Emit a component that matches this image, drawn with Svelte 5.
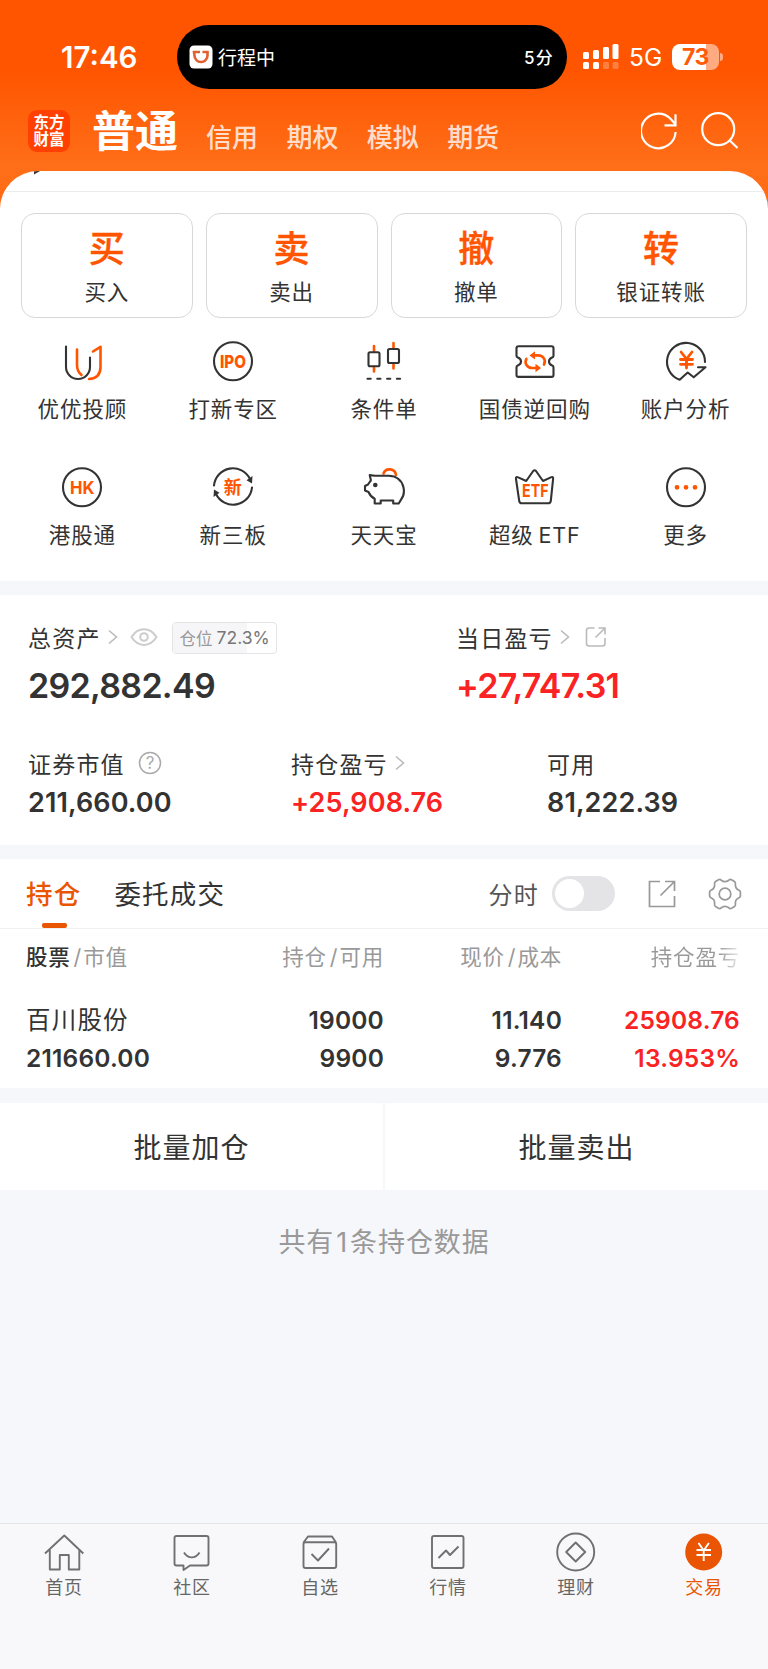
<script lang="ts">
  const accounts = ['信用', '期权', '模拟', '期货'];

  const actions = [
    { mark: '买', label: '买入' },
    { mark: '卖', label: '卖出' },
    { mark: '撤', label: '撤单' },
    { mark: '转', label: '银证转账' },
  ];

  const tools = [
    { icon: 'adviser', label: '优优投顾' },
    { icon: 'ipo', label: '打新专区' },
    { icon: 'candles', label: '条件单' },
    { icon: 'bond', label: '国债逆回购' },
    { icon: 'analysis', label: '账户分析' },
    { icon: 'hk', label: '港股通' },
    { icon: 'neeq', label: '新三板' },
    { icon: 'piggy', label: '天天宝' },
    { icon: 'etf', label: '超级\u2009ETF' },
    { icon: 'more', label: '更多' },
  ];

  const position = 72.3;

  const navs = [
    { icon: 'home', label: '首页' },
    { icon: 'community', label: '社区' },
    { icon: 'watchlist', label: '自选' },
    { icon: 'market', label: '行情' },
    { icon: 'wealth', label: '理财' },
    { icon: 'trade', label: '交易' },
  ];

  let currentNav = $state('trade');
  let timeline = $state(false);
</script>

{#snippet chevron()}
  <svg class="chevron" width="10" height="16" viewBox="0 0 10 16"><path d="M1 1.5l7.5 6.5L1 14.5" /></svg>
{/snippet}

{#snippet toolIcon(name: string)}
  <svg class="tool-icon" width="44" height="44" viewBox="0 0 44 44">
    {#if name === 'adviser'}
      <path d="M6 7.500v20.500a12 12 0 0 0 24 0V18.500" />
      <path class="hot" d="M17 10.500v15.500c0 4.500 1.500 7.500 4.500 10M33 12.500l7.500-4.700V28c0 7.500-4 11.500-11.500 12" />
    {:else if name === 'ipo'}
      <circle cx="22" cy="22.300" r="19" />
      <text class="ipo" x="9" y="28.600" textLength="26" lengthAdjust="spacingAndGlyphs">IPO</text>
    {:else if name === 'candles'}
      <path class="hot" d="M12 7V12.500M12 28v4.500M31.500 4V9M31.500 25v4.500" />
      <rect x="6.500" y="13.200" width="11" height="14" rx="1.500" />
      <rect x="26" y="10" width="11" height="14" rx="1.500" />
      <path stroke-dasharray="3.2 6.6" d="M5.500 39.800h36" />
    {:else if name === 'bond'}
      <path d="M5.500 7.300h33q2 0 2 2v7.500q0 1.300-1.300 1.800-3.200 1.200-3.200 4t3.200 4q1.300.500 1.300 1.800v7.500q0 2-2 2h-33q-2 0-2-2v-7.500q0-1.300 1.300-1.800 3.200-1.200 3.200-4t-3.200-4q-1.300-.500-1.300-1.800V9.300q0-2 2-2z" />
      <path class="hot" d="M21 16.400h4c5.500 0 8.300 5 6 9.200M23.400 29h-4c-5.500 0-8.300-5-6-9.200" />
      <path class="hot-fill" d="M16.500 16.400l5.500-4.200v8.400zM28 29l-5.500-4.200v8.400z" />
    {:else if name === 'analysis'}
      <path d="M41 23A19 19 0 1 0 15.700 40.800l8-7.300 6 4.800 11.800-10H34" />
      <path class="hot thick" d="M17 13l5.500 7 5.500-7M22.500 20v9M16.500 20.500h12M16.500 25.300h12" />
    {:else if name === 'hk'}
      <circle cx="22" cy="22.300" r="19" />
      <text class="hk" x="10" y="28.800" textLength="24.500" lengthAdjust="spacingAndGlyphs">HK</text>
    {:else if name === 'neeq'}
      <path d="M3 20.500A19 19 0 0 1 39 14M41 22.500A19 19 0 0 1 5 29" />
      <path class="dark-fill" d="M41.500 11l-.5 7.500-5.500-3.200zM2.500 32l.5-7.500 5.500 3.200z" />
      <text class="xin" x="21.800" y="28.700">新</text>
    {:else if name === 'piggy'}
      <path class="hot" d="M21.500 8.500a6.500 6.500 0 0 1 12.500 1.500" />
      <path d="M13.500 10.300L8.200 9.600l1.200 5.200-2.900 4.200-3 1.500v4.500l3.500 1.500c1.500 3.500 3.500 5.500 6.200 6.800v4.700h6v-3h12.500v3h5.500l2.200-3.600C42.500 30.500 43 26.500 42 22 40.500 15 35 10.300 27 10.300z" transform="translate(-.5 .5)" />
      <circle class="dark-fill" cx="13.300" cy="20" r="2.300" />
    {:else if name === 'etf'}
      <path d="M3 14c-.300-2 .800-2.400 2.200-1.600l8 3.600 7-10q1.400-1.500 2.800 0l7 10 7.800-3.600c1.600-.700 2.600-.300 2.300 1.600l-2.300 21.800q-.300 2.500-2.800 2.500H9q-2.500 0-2.800-2.500z" />
      <text class="etf" x="9" y="32.300" textLength="26.500" lengthAdjust="spacingAndGlyphs">ETF</text>
    {:else}
      <circle cx="22" cy="22.300" r="19" />
      <path class="hot-fill" d="M10.600 22.300a2.400 2.400 0 1 0 4.800 0 2.400 2.400 0 1 0-4.800 0M19.600 22.300a2.400 2.400 0 1 0 4.800 0 2.400 2.400 0 1 0-4.800 0M28.600 22.300a2.400 2.400 0 1 0 4.800 0 2.400 2.400 0 1 0-4.800 0" />
    {/if}
  </svg>
{/snippet}

{#snippet navIcon(name: string)}
  <svg class="nav-icon" width="40" height="40" viewBox="0 0 40 40">
    {#if name === 'home'}
      <path d="M1 21.500L20.300 3.500l19 18M5.800 18v19.500h10V23h9v14.500h10.500V18" />
    {:else if name === 'community'}
      <path d="M4.500 4h30q2 0 2 2v25.500q0 2-2 2H18l-6.500 4.500v-4.500h-7q-2 0-2-2V6q0-2 2-2zM12 20.500c4 6.500 11.500 6.500 15.500 0" />
    {:else if name === 'watchlist'}
      <path d="M3.500 10.500L8 4.500h24l4 6M5.500 10.300h29q1.700 0 1.700 1.700v22q0 2-2 2H5.500q-2 0-2-2V12q0-1.700 2-1.700zM11.500 22l6.500 6.500 11-12" />
    {:else if name === 'market'}
      <rect x="4" y="4" width="31.500" height="32" rx="2" />
      <path d="M10.500 26l7.500-7.500 4 4.500 8.500-8.500" />
    {:else if name === 'wealth'}
      <circle cx="19.700" cy="20" r="18.500" />
      <path d="M19.700 10.500l9.500 9.500-9.500 9.500-9.500-9.500z" />
    {:else}
      <circle class="disc" cx="19.700" cy="20" r="18.500" />
      <path class="yen" d="M14.500 11l5.200 7.500 5.200-7.500M19.700 18.500V29M12.500 18h14.500M12.500 23h14.500" />
    {/if}
  </svg>
{/snippet}

<div class="app">
  <div class="status">
    <span class="clock">17:46</span>
    <div class="island">
      <svg width="24" height="24" viewBox="0 0 24 24">
        <rect x=".5" y=".5" width="23" height="23" rx="4.500" fill="#fff" />
        <path d="M5 7h13.500v3.500a6.500 6.500 0 0 1-13 0z" fill="none" stroke="#e0602f" stroke-width="2.600" />
        <path d="M11 5h2.500v4H11z" fill="#fff" />
      </svg>
      <span class="trip">行程中</span>
      <span class="minutes">5分</span>
    </div>
    <svg class="signal" width="37" height="26" viewBox="0 0 37 26" fill="#fff">
      <rect x="0" y="8" width="6" height="7" rx="1.500" />
      <rect x="10" y="6" width="6" height="9" rx="1.500" />
      <rect x="20" y="3" width="6" height="12" rx="1.500" />
      <rect x="29.500" y="0" width="6" height="15" rx="1.500" />
      <rect x="0" y="18" width="6" height="7" rx="1.500" />
      <rect x="10" y="18" width="6" height="7" rx="1.500" />
      <rect x="20" y="18" width="6" height="7" rx="1.500" opacity=".25" />
      <rect x="29.500" y="18" width="6" height="7" rx="1.500" opacity=".25" />
    </svg>
    <span class="network">5G</span>
    <span class="battery">73</span>
    <i class="nub"></i>
  </div>

  <header class="top">
    <div class="logo"><span>东方</span><span>财富</span></div>
    <h1>普通</h1>
    {#each accounts as account}
      <span class="account">{account}</span>
    {/each}
    <svg class="refresh" width="38" height="38" viewBox="0 0 38 38">
      <path d="M34.600 20A17.300 17.300 0 1 1 29.500 6.700l4.500 5M34.500 2.300v11H23.500" />
    </svg>
    <svg class="search" width="38" height="38" viewBox="0 0 38 38">
      <circle cx="17.200" cy="17.200" r="16" />
      <path d="M28.500 28.300l8 7.700" />
    </svg>
  </header>

  <section class="sheet">
    <div class="peek">
      <svg width="6" height="4" viewBox="0 0 6 4"><path d="M0 0h6L0 3.500z" fill="#333" /></svg>
    </div>
    <div class="actions">
      {#each actions as action}
        <button class="action">
          <b>{action.mark}</b>
          <span>{action.label}</span>
        </button>
      {/each}
    </div>
    <div class="tools">
      {#each tools as tool}
        <div class="tool">
          {@render toolIcon(tool.icon)}
          <span>{tool.label}</span>
        </div>
      {/each}
    </div>
  </section>

  <section class="assets">
    <div class="row main">
      <div class="asset">
        <div class="label">
          总资产{@render chevron()}
          <svg class="eye" width="28" height="20" viewBox="0 0 28 20">
            <path d="M1.500 10C8-.5 20-.5 26.500 10 20 20.500 8 20.500 1.500 10z" />
            <circle cx="14" cy="10" r="3.800" />
          </svg>
          <span class="position">
            <i style="width: {position}%"></i>
            <em>仓位</em>{position}%
          </span>
        </div>
        <strong>292,882.49</strong>
      </div>
      <div class="asset">
        <div class="label">
          当日盈亏{@render chevron()}
          <svg class="share" width="22" height="22" viewBox="0 0 22 22">
            <path d="M9.500 2H4Q1.500 2 1.500 4.500V17.500Q1.500 20 4 20H17.500Q20 20 20 17.500V12M13.500 2H20V8.500M20 2l-9.500 9.500" />
          </svg>
        </div>
        <strong class="up">+27,747.31</strong>
      </div>
    </div>
    <div class="row sub">
      <div class="asset">
        <div class="label">
          证券市值
          <svg class="help" width="24" height="24" viewBox="0 0 24 24">
            <circle cx="12" cy="12" r="10.500" />
            <text x="12" y="18">?</text>
          </svg>
        </div>
        <strong>211,660.00</strong>
      </div>
      <div class="asset">
        <div class="label">持仓盈亏{@render chevron()}</div>
        <strong class="up">+25,908.76</strong>
      </div>
      <div class="asset">
        <div class="label">可用</div>
        <strong>81,222.39</strong>
      </div>
    </div>
  </section>

  <section class="holdings">
    <div class="tabs">
      <span class="tab active">持仓</span>
      <span class="tab">委托成交</span>
      <span class="timeline">分时</span>
      <button class="switch" class:on={timeline} aria-label="分时" onclick={() => (timeline = !timeline)}></button>
      <svg class="export" width="28" height="28" viewBox="0 0 28 28">
        <path d="M12 1.500H1.500v25h25V16M17 1.500h9.500V11M26.500 1.500L12.500 15.500" />
      </svg>
      <svg class="gear" width="34" height="34" viewBox="0 0 34 34">
        <path d="M10.500 2.800q1.500-.8 2.700.4 3.800 2.800 7.600 0 1.200-1.200 2.700-.4l3 1.700q1.200.8.900 2.500-.500 4.500 3.600 6.200 1.400.6 1.400 2v3.600q0 1.400-1.400 2-4.100 1.700-3.600 6.200.3 1.700-.9 2.500l-3 1.700q-1.500.8-2.700-.4-3.800-2.800-7.600 0-1.200 1.200-2.700.4l-3-1.700q-1.200-.8-.9-2.500.500-4.500-3.600-6.200-1.400-.6-1.400-2v-3.600q0-1.400 1.400-2 4.100-1.700 3.600-6.200-.3-1.700.9-2.500z" />
        <circle cx="17" cy="17" r="5.800" />
      </svg>
    </div>
    <div class="grid head">
      <span class="first"><b>股票</b><i>/</i>市值</span>
      <span>持仓<i>/</i>可用</span>
      <span>现价<i>/</i>成本</span>
      <span class="fade">持仓盈亏</span>
    </div>
    <div class="grid stock">
      <span class="first name">百川股份</span>
      <span>19000</span>
      <span>11.140</span>
      <span class="up">25908.76</span>
      <span class="first">211660.00</span>
      <span>9900</span>
      <span>9.776</span>
      <span class="up">13.953%</span>
    </div>
  </section>

  <div class="batch">
    <button>批量加仓</button>
    <button>批量卖出</button>
  </div>

  <p class="count">共有<i>1</i>条持仓数据</p>

  <nav>
    {#each navs as item}
      <button class:current={currentNav === item.icon} onclick={() => (currentNav = item.icon)}>
        {@render navIcon(item.icon)}
        <span>{item.label}</span>
      </button>
    {/each}
  </nav>
</div>

<style>
  :global(body) {
    background: #f6f7fa;
  }

  .app {
    width: 768px;
    height: 1669px;
    display: flex;
    flex-direction: column;
    overflow: hidden;
    box-sizing: border-box;
    color: #333;
    font-family: Inter, "Noto Sans CJK SC", sans-serif;
    background: linear-gradient(#ff5500 70px, #ff6e18 165px, #ff6a14 215px, #f6f7fa 215px);
  }

  button {
    margin: 0;
    padding: 0;
    border: none;
    background: none;
    color: inherit;
    font: inherit;
    letter-spacing: inherit;
  }

  svg {
    flex: none;
    fill: none;
  }

  i, em {
    font-style: normal;
  }

  .status {
    display: flex;
    align-items: center;
    height: 64px;
    padding: 24.5px 0 0 61px;
    color: #fff;
  }

  .clock {
    width: 116px;
    font-size: 29.5px;
    font-weight: 600;
    line-height: 64px;
    padding-top: 1px;
  }

  .island {
    display: flex;
    align-items: center;
    width: 390px;
    height: 64px;
    padding: 0 13px 0 12px;
    box-sizing: border-box;
    border-radius: 32px;
    background: #000;
    color: #fff;
    font-size: 19px;
  }

  .trip {
    margin-left: 5px;
  }

  .minutes {
    margin-left: auto;
    font-size: 17px;
    font-weight: 500;
    letter-spacing: 1.2px;
  }

  .signal {
    margin-left: 16px;
    fill: #fff;
  }

  .network {
    margin-left: 9px;
    width: 43px;
    font-size: 24.5px;
  }

  .battery {
    width: 47px;
    height: 26px;
    border-radius: 8px;
    background: linear-gradient(90deg, #fff 34px, #ffab82 34px);
    color: #ff5a08;
    font-size: 23px;
    font-weight: 700;
    line-height: 26px;
    text-align: center;
    letter-spacing: -0.5px;
  }

  .nub {
    width: 3px;
    height: 8px;
    margin-left: 1px;
    border-radius: 0 4px 4px 0;
    background: #ffab82;
  }

  .top {
    display: flex;
    height: 82.5px;
    padding-left: 28px;
    color: #fff;
  }

  .logo {
    display: flex;
    flex-direction: column;
    width: 42px;
    height: 42px;
    margin-top: 21.5px;
    padding-top: 4px;
    box-sizing: border-box;
    border-radius: 9px;
    background: #ff4000;
    font-size: 15.5px;
    font-weight: 700;
    line-height: 17px;
    text-align: center;
  }

  h1 {
    margin: 0 14px 0 22px;
    font-size: 43px;
    font-weight: 700;
    line-height: 84px;
  }

  .account {
    margin-left: 14px;
    margin-right: 14.4px;
    width: 52px;
    color: rgba(255, 255, 255, 0.8);
    font-size: 26px;
    font-weight: 500;
    line-height: 98px;
    white-space: nowrap;
  }

  .refresh, .search {
    margin-top: 23.5px;
    stroke: #fff;
    stroke-width: 2.2;
  }

  .refresh {
    margin-left: auto;
    margin-right: 22px;
  }

  .search {
    margin-right: 29px;
  }

  .sheet {
    height: 410px;
    border-radius: 38px 38px 0 0;
    overflow: hidden;
    background: #fff;
    font-size: 21.5px;
    letter-spacing: 0.9px;
  }

  .peek {
    display: flex;
    height: 20px;
    padding-left: 34px;
    border-bottom: 1px solid #ececec;
  }

  .actions {
    display: grid;
    grid-template-columns: repeat(4, 1fr);
    gap: 13px;
    padding: 21px 21px 0;
  }

  .action {
    display: flex;
    flex-direction: column;
    align-items: center;
    height: 105px;
    border: 1px solid #d8d8d8;
    border-radius: 14px;
  }

  .action b {
    margin-top: 9px;
    height: 52px;
    color: #ff5500;
    font-size: 36px;
    font-weight: 500;
    line-height: 52px;
    letter-spacing: 0;
    -webkit-text-stroke: 0.4px #ff5500;
  }

  .action span {
    line-height: 34px;
  }

  .tools {
    display: grid;
    grid-template-columns: repeat(5, 1fr);
    grid-auto-rows: 126px;
    padding: 21px 7px 0;
  }

  .tool {
    display: flex;
    flex-direction: column;
    align-items: center;
    white-space: nowrap;
  }

  .tool span {
    margin-top: 8px;
    line-height: 36px;
  }

  .tool-icon {
    stroke: #333;
    stroke-width: 2.1;
    stroke-linecap: round;
    stroke-linejoin: round;
  }

  .tool-icon .hot {
    stroke: #ff5500;
    stroke-width: 2.6;
  }

  .tool-icon .thick {
    stroke-width: 2.8;
  }

  .hot-fill {
    fill: #ff5500;
    stroke: none;
  }

  .dark-fill {
    fill: #333;
    stroke: none;
  }

  .tool-icon text {
    fill: #ff5500;
    stroke: none;
    font-weight: 700;
    letter-spacing: 0;
  }

  .tool-icon .ipo {
    font-size: 17.5px;
    font-weight: 800;
  }

  .tool-icon .hk {
    font-size: 18px;
  }

  .tool-icon .xin {
    font-size: 18px;
    text-anchor: middle;
  }

  .tool-icon .etf {
    font-size: 18px;
  }

  .assets {
    margin-top: 14px;
    height: 250px;
    background: #fff;
    font-size: 23px;
    letter-spacing: 1.2px;
  }

  .row {
    display: grid;
    padding-left: 28px;
  }

  .main {
    grid-template-columns: 428px 1fr;
    padding-top: 24px;
    height: 126px;
    box-sizing: border-box;
  }

  .sub {
    grid-template-columns: 263px 256px 1fr;
    padding-top: 24px;
  }

  .label {
    display: flex;
    align-items: center;
    height: 35px;
    margin-bottom: 3px;
  }

  .label svg {
    margin-top: 1px;
  }

  .chevron {
    margin-left: 7px;
    stroke: #bbb;
    stroke-width: 1.6;
  }

  .eye {
    margin-left: 12px;
    stroke: #ccc;
    stroke-width: 2;
  }

  .position {
    position: relative;
    display: flex;
    align-items: center;
    height: 32px;
    width: 105px;
    margin-top: 2px;
    margin-left: 14px;
    padding-left: 7px;
    box-sizing: border-box;
    border: 1px solid #e3e4e6;
    border-radius: 4px;
    overflow: hidden;
    color: #777;
    font-size: 17.5px;
    letter-spacing: 0;
    isolation: isolate;
  }

  .position i {
    position: absolute;
    inset: 0 auto 0 0;
    z-index: -1;
    background: #f6f6f9;
  }

  .position em {
    margin-right: 4px;
    color: #999;
    font-size: 16.5px;
  }

  .share {
    margin-left: 15px;
    stroke: #bbb;
    stroke-width: 1.6;
  }

  .help {
    margin-left: 13px;
    stroke: #aaa;
    stroke-width: 1.5;
  }

  .help text {
    fill: #aaa;
    stroke: none;
    font-size: 17px;
    text-anchor: middle;
    letter-spacing: 0;
  }

  strong {
    display: block;
    font-weight: 600;
  }

  .main strong {
    font-size: 34px;
    line-height: 58px;
    letter-spacing: -0.7px;
  }

  .sub strong {
    font-size: 27px;
    line-height: 40px;
    letter-spacing: 0.1px;
  }

  .up {
    color: #fa2222;
  }

  .holdings {
    margin-top: 14px;
    height: 229px;
    background: #fff;
  }

  .tabs {
    display: flex;
    align-items: center;
    height: 70px;
    padding: 0 26px;
    box-sizing: border-box;
    border-bottom: 1px solid #f0f0f0;
    font-size: 26.5px;
    letter-spacing: 1.2px;
  }

  .tab {
    position: relative;
    margin-right: 33px;
    line-height: 68px;
  }

  .active {
    color: #ea5504;
    font-weight: 500;
  }

  .active::after {
    content: "";
    position: absolute;
    left: 16px;
    bottom: 0;
    width: 25px;
    height: 5px;
    border-radius: 2px;
    background: #ea5504;
  }

  .timeline {
    margin-left: auto;
    color: #555;
    font-size: 24px;
  }

  .switch {
    width: 63px;
    height: 35px;
    margin-left: 13px;
    padding: 3px;
    border-radius: 18px;
    background: #e4e4e6;
    text-align: left;
  }

  .switch::before {
    content: "";
    display: block;
    width: 29px;
    height: 29px;
    border-radius: 50%;
    background: #fff;
  }

  .switch.on {
    background: #ea5504;
  }

  .switch.on::before {
    margin-left: auto;
  }

  .export {
    margin-left: 33px;
    stroke: #999;
    stroke-width: 1.7;
  }

  .gear {
    margin-left: 32px;
    stroke: #999;
    stroke-width: 1.7;
  }

  .grid {
    display: grid;
    grid-template-columns: 178px 180px 178px 178px;
    padding-left: 26px;
    text-align: right;
  }

  .first {
    text-align: left;
  }

  .head {
    color: #999;
    font-size: 21.5px;
    line-height: 56px;
    letter-spacing: 0.8px;
  }

  .head b {
    color: #333;
    font-weight: 500;
  }

  .head i {
    margin: 0 1px 0 3px;
  }

  .fade {
    background: linear-gradient(90deg, #999 88%, #eee 100%);
    background-clip: text;
    color: transparent;
  }

  .stock {
    padding-top: 16px;
    grid-auto-rows: 38px;
    line-height: 38px;
    font-size: 24.5px;
    font-weight: 600;
    letter-spacing: 0.2px;
  }

  .name {
    font-weight: 400;
    letter-spacing: 1.2px;
  }

  .batch {
    display: grid;
    grid-template-columns: 1fr 1fr;
    gap: 2px;
    margin-top: 15px;
  }

  .batch button {
    height: 87px;
    padding-top: 4px;
    background: #fff;
    font-size: 28px;
    letter-spacing: 1px;
    line-height: 83px;
  }

  .count {
    margin: 34px 0 0;
    color: #999;
    font-size: 27px;
    line-height: 38px;
    letter-spacing: 0.9px;
    text-align: center;
  }

  .count i {
    margin: 0 2px;
  }

  nav {
    display: grid;
    grid-template-columns: repeat(6, 1fr);
    height: 146px;
    margin-top: auto;
    box-sizing: border-box;
    border-top: 1px solid #e6e6ea;
    background: #f8f8fb;
    color: #666;
    font-size: 18px;
    letter-spacing: 0.8px;
  }

  nav button {
    display: flex;
    flex-direction: column;
    align-items: center;
    padding-top: 7.5px;
  }

  nav span {
    margin-top: 3.5px;
    line-height: 26px;
  }

  .nav-icon {
    stroke: #707070;
    stroke-width: 1.9;
    stroke-linejoin: round;
  }

  .nav-icon .disc {
    fill: #ea5504;
    stroke: none;
  }

  .nav-icon .yen {
    stroke: #fff;
  }

  .current {
    color: #ea5504;
  }
</style>
